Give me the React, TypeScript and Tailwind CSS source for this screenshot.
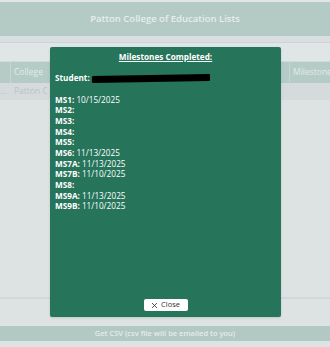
import React from 'react';

const milestones: [string, string][] = [
    ['MS1:', '10/15/2025'],
    ['MS2:', ''],
    ['MS3:', ''],
    ['MS4:', ''],
    ['MS5:', ''],
    ['MS6:', '11/13/2025'],
    ['MS7A:', '11/13/2025'],
    ['MS7B:', '11/10/2025'],
    ['MS8:', ''],
    ['MS9A:', '11/13/2025'],
    ['MS9B:', '11/10/2025'],
];

const App: React.FC = () => {
    return (
        <div className="relative w-[330px] h-[347px] overflow-hidden bg-[#dde2e3] font-['Open_Sans','Noto_Sans',sans-serif]">
            {/* Page behind the overlay */}
            <div className="flex flex-col h-full">
                <div className="h-[2px] bg-[#e2e6e7]" />
                <div className="h-[34px] bg-[#b4cbc5] flex items-center justify-center text-[9.5px] text-[#e7eeec] font-semibold">
                    Patton College of Education Lists
                </div>
                <div className="h-[7px] bg-[#d9dfe0] border-b border-[#cdd4d5]" />
                <div className="h-[19px] bg-[#e0e5e6] border-b border-[#d3d9da]" />

                {/* Table header */}
                <div className="h-[21px] bg-[#b5cbc6] flex text-[8.5px] text-[#e3ebe9]">
                    <div className="w-[11px] border-r border-[#c6d6d2]" />
                    <div className="flex-1 flex items-center pl-[3px]">College</div>
                    <div className="w-[41px] border-l border-[#c6d6d2] flex items-center pl-[3px] whitespace-nowrap overflow-hidden">
                        Milestone S
                    </div>
                </div>

                {/* Table row */}
                <div className="h-[17px] bg-[#d5dbdc] flex text-[8.5px] text-[#b9c3c4]">
                    <div className="w-[11px] flex items-center overflow-hidden">...</div>
                    <div className="w-[36px] flex items-center pl-[3px] whitespace-nowrap overflow-hidden">Patton Co</div>
                </div>

                <div className="flex-1 border-b-2 border-[#d2d8d9] bg-[#dde2e3]" />
                <div className="h-[27px]" />

                {/* Bottom bar */}
                <div className="h-[15px] bg-[#b2c9c3] flex items-center justify-center text-[7.5px] font-semibold text-[#e4ecea]">
                    Get CSV (csv file will be emailed to you)
                </div>
                <div className="h-[6px]" />
            </div>

            {/* Modal */}
            <div className="absolute left-[50px] top-[47px] w-[231px] h-[270px] bg-[#26745a] rounded-[2px] shadow-sm flex flex-col px-[5px] text-white text-[8.2px] leading-[10.65px]">
                <div className="text-center font-bold underline pt-[5px]">Milestones Completed:</div>
                <div className="h-[10.65px]" />
                <div className="flex items-center">
                    <span className="font-bold">Student:</span>
                    <span className="ml-[2px] inline-block w-[118px] h-[7px] bg-black -skew-y-[1deg] rounded-[1px]" />
                </div>
                <div className="h-[10.65px]" />
                {milestones.map(([label, date]) => (
                    <div key={label}>
                        <span className="font-bold">{label}</span>
                        {date && <span> {date}</span>}
                    </div>
                ))}
                <div className="flex-1" />
                <div className="flex justify-center pb-[6px]">
                    <button className="w-[44px] h-[12px] bg-white rounded-[2px] flex items-center justify-center gap-[3px] text-[#333] text-[7.5px] leading-none">
                        <svg width="7" height="7" viewBox="0 0 10 10" fill="none" stroke="#333" strokeWidth="1.2">
                            <path d="M1.5 1.5 L8.5 8.5 M8.5 1.5 L1.5 8.5" />
                        </svg>
                        Close
                    </button>
                </div>
            </div>
        </div>
    );
};

export default App;
